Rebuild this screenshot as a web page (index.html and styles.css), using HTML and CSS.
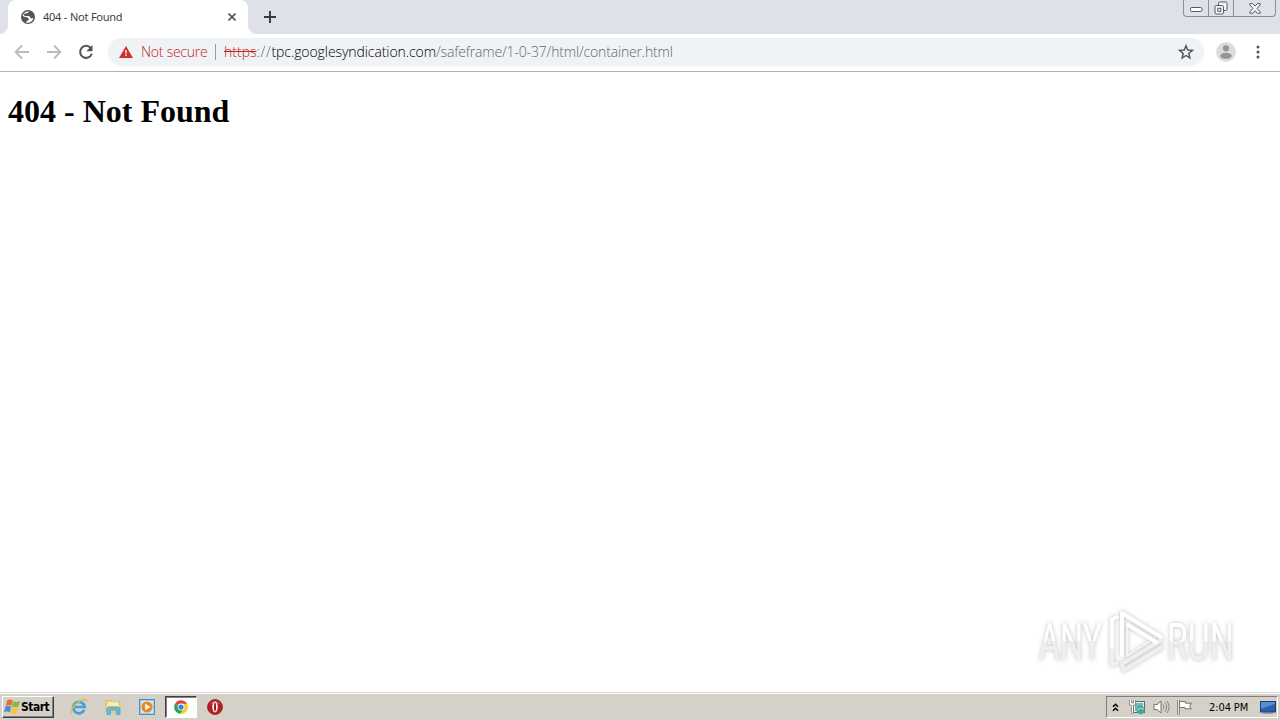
FILE: index.html
```html
<!DOCTYPE html>
<html lang="en">
<head>
  <meta charset="UTF-8">
  <title>404 - Not Found</title>
  <link rel="stylesheet" href="styles.css">
</head>
<body>
<div class="tabstrip">
  <div class="tab">
    <svg class="globe" width="14" height="14" viewBox="0 0 14 14">
      <circle cx="7" cy="7" r="7" fill="#50555a"/>
      <path d="M7.8 1.5 5.5 3.4l.3 1.5L4.5 6h4l1.300 1.800 2.800-.4A5.700 5.700 0 0 1 6 12.600l.2-1.500 1.800-1V8.700L6.800 7.600H3.600L1.400 6.500A5.600 5.600 0 0 1 7.800 1.500Z" fill="#fff" transform="rotate(8 7 7)"/>
      <path d="M2.5 4.3 5.5 3l1 2.200L4 6.500Z" fill="#50555a"/>
    </svg>
    <span class="tab-title">404 - Not Found</span>
    <svg class="close" width="8" height="8" viewBox="0 0 8 8"><path d="M.5.5l7 7M7.5.5l-7 7" stroke="#55595e" stroke-width="1.7"/></svg>
  </div>
  <svg class="plus" width="12" height="12" viewBox="0 0 12 12"><path d="M6 0v12M0 6h12" stroke="#35383d" stroke-width="1.9"/></svg>
  <div class="winbuttons">
    <div class="wb min"><svg width="13" height="6" viewBox="0 0 13 6"><rect x=".5" y=".5" width="11.5" height="4" rx="1.3" fill="#fff" stroke="#555a66"/></svg></div>
    <div class="wb max"><svg width="14" height="14" viewBox="0 0 14 14" fill="#f4f5f8" stroke="#555a66"><rect x="4.5" y="1" width="8.5" height="8.5" rx="1.2"/><rect x="1" y="4.5" width="8.5" height="8.5" rx="1.2"/><rect x="3.8" y="7.3" width="3" height="3"/></svg></div>
    <div class="wb cls"><svg width="12" height="11" viewBox="0 0 12 11"><path d="M.8.7h3L6 3.2 8.2.7h3v1.2L8 5.5l3.2 3.4v1.3h-3L6 7.7l-2.2 2.5h-3V8.9L4 5.5.8 1.9Z" fill="#f8f8fa" stroke="#555a66"/></svg></div>
  </div>
</div>

<div class="toolbar">
  <svg class="nav" width="16" height="16" viewBox="0 0 16 16"><path d="M15 8H2M8 1.5 1.6 8 8 14.5" fill="none" stroke="#b9babc" stroke-width="1.8"/></svg>
  <svg class="nav" width="16" height="16" viewBox="0 0 16 16"><path d="M1 8h13M8 1.5 14.4 8 8 14.5" fill="none" stroke="#b9babc" stroke-width="1.8"/></svg>
  <svg class="nav" width="16" height="16" viewBox="0 0 16 16"><path d="M12.7 4A6 6 0 1 0 13.8 9.7" fill="none" stroke="#505357" stroke-width="2"/><path d="M14.5 1v6.3H8.3Z" fill="#505357"/></svg>
  <div class="omnibox">
    <svg width="14" height="12" viewBox="0 0 14 12"><path d="M7 0l7 12H0Z" fill="#cf3029"/><path d="M7 4v3.6M7 8.6v1.5" stroke="#fff" stroke-width="1.4"/></svg>
    <span class="notsecure">Not secure</span>
    <span class="sep"></span>
    <div class="url"><span class="scheme">https</span><span class="slashes">://</span><span class="host">tpc.googlesyndication.com</span><span class="path">/safeframe/1-0-37/html/container.html</span></div>
    <svg class="star" width="16" height="16" viewBox="0 0 16 16"><path d="M8 1.7 9.7 6l4.7.4-3.6 3 1.1 4.6L8 11.5 4.1 14l1.1-4.6-3.6-3L6.3 6Z" fill="none" stroke="#505357" stroke-width="1.4"/></svg>
  </div>
  <svg class="avatar" width="20" height="20" viewBox="0 0 20 20"><circle cx="10" cy="10" r="10" fill="#dcdcdc"/><circle cx="10" cy="6.3" r="3.1" fill="#949494"/><ellipse cx="10" cy="13.8" rx="5.8" ry="3" fill="#949494"/></svg>
  <svg class="dots" width="4" height="14" viewBox="0 0 4 14" fill="#505357"><circle cx="2" cy="2" r="1.5"/><circle cx="2" cy="7" r="1.5"/><circle cx="2" cy="12" r="1.5"/></svg>
</div>

<div class="page">
  <h1>404 - Not Found</h1>
  <div class="watermark">
    <svg width="246" height="80" viewBox="0 0 246 80">
      <defs>
        <linearGradient id="fade" gradientUnits="userSpaceOnUse" x1="0" y1="17" x2="0" y2="55">
          <stop offset="0.5" stop-color="#fff"/>
          <stop offset="0.5" stop-color="#efefef"/>
        </linearGradient>
      </defs>
      <g class="wm-letters" fill="url(#fade)">
        <text x="9" y="55" textLength="63" lengthAdjust="spacingAndGlyphs">ANY</text>
        <text x="137" y="55" textLength="67" lengthAdjust="spacingAndGlyphs">RUN</text>
      </g>
      <g class="wm-logo" fill="none" stroke-linejoin="round" stroke-linecap="round">
        <path d="M82 42v18l5-2M92 59l2 6 38-23M92 59l39-24" stroke="#efefef"/>
        <path d="M82 42V14l5-2" stroke="#fff"/>
        <path d="M92 50V8l39 24M98 20l28 17" stroke="#fff"/>
        <path d="M97 22v29l22-14" stroke="#f4f4f4" stroke-width="2"/>
      </g>
    </svg>
  </div>
</div>

<div class="taskbar">
  <div class="start">
    <svg width="17" height="16" viewBox="0 0 17 16">
      <path d="M3.2 1.5Q6-.5 8.7 1.5L7.4 7Q4.7 5.2 1.7 7Z" fill="#ef6a2d"/>
      <path d="M9.3 1.9Q12.3 4 16 1.9L14.6 7.5Q11 9 7.9 7.3Z" fill="#83b94a"/>
      <path d="M1.4 7.7Q4.3 6 7.2 7.8L5.8 13.3Q3 11.5 0 13.3Z" fill="#4b8fd4"/>
      <path d="M7.7 8.2Q11 10 14.4 8.3L12.9 14Q9.5 15.6 6.3 13.8Z" fill="#f8c53a"/>
    </svg>
    <span>Start</span>
  </div>
  <div class="launch">
    <div class="app">
      <svg width="18" height="18" viewBox="0 0 18 18"><path d="M14.3 11.8A5.7 5.7 0 1 1 14.7 9H5" fill="none" stroke="#3fa2dc" stroke-width="2.7"/><path d="M2 16C-1 13 4 6.5 9.5 3.3 13.5 1 17 .6 16.8 3.5" fill="none" stroke="#e6bd3e" stroke-width="1.4"/></svg>
    </div>
    <div class="app">
      <svg width="18" height="18" viewBox="0 0 18 18"><path d="M2 2.5h5l1 1.5h8V14H2Z" fill="#f0d57a" stroke="#d4b45c" stroke-width=".7"/><path d="M4 5h10M3 7h12" stroke="#fff3b9" stroke-width="1.5"/><path d="M3 16.5v-5Q3 9 5.5 9h7.5Q16 9 16 11.5v5h-3.5v-4.5H6.5v4.5Z" fill="#65b7df" stroke="#4b95bf" stroke-width=".6"/></svg>
    </div>
    <div class="app">
      <svg width="18" height="18" viewBox="0 0 18 18"><rect x="1.5" y="1.5" width="15" height="15" fill="#9bc9ec" stroke="#4e8fc8"/><rect x="3" y="3" width="12" height="12" fill="#d4e9f7"/><circle cx="9" cy="9" r="5.6" fill="#ef8420"/><path d="M7.2 5.7 12.4 9l-5.2 3.3Z" fill="#fff"/></svg>
    </div>
    <div class="app active">
      <svg width="16" height="16" viewBox="0 0 16 16"><path d="M8 8 2.1 4.6A6.8 6.8 0 0 1 14 4.7Z" fill="#dc4537"/><path d="M8 8 2.1 4.6A6.8 6.8 0 0 0 7.5 14.8L11 9.7Z" fill="#2da451"/><path d="M8 4.7h6A6.8 6.8 0 0 1 7.5 14.8L11 9.7Z" fill="#fbcb35"/><circle cx="8" cy="8" r="3.4" fill="#fff"/><circle cx="8" cy="8" r="2.6" fill="#3d7fe0"/></svg>
    </div>
    <div class="app">
      <svg width="18" height="18" viewBox="0 0 18 18"><circle cx="9" cy="9" r="7.5" fill="#b91d22" stroke="#7e1215" stroke-width=".7"/><path d="M3.5 6Q9-1 14.5 6Z" fill="#da6261" opacity=".6"/><ellipse cx="9" cy="9" rx="2.7" ry="5.4" fill="#fff"/><ellipse cx="9" cy="9" rx="1" ry="4.4" fill="#98171b"/></svg>
    </div>
  </div>
  <div class="tray">
    <svg class="chev" width="7" height="9" viewBox="0 0 7 9"><path d="M1 3.8 3.5 1.2 6 3.8M1 7.8 3.5 5.2 6 7.8" fill="none" stroke="#000" stroke-width="1.4"/></svg>
    <svg class="net" width="18" height="16" viewBox="0 0 18 16"><rect x="4.5" y="2.5" width="11" height="11" fill="#e4f1ef" stroke="#566b70"/><rect x="6" y="4" width="8" height="8" fill="#7bb3ae"/><circle cx="11.5" cy="11" r="4.2" fill="#46a69b"/><path d="M8 11q3-3 7-1" stroke="#b8e0d0" fill="none"/><path d="M1.5 1v4h4V1M3.5 5v9.5" fill="none" stroke="#666" stroke-width="2.5"/><path d="M1.5 1v4h4V1M3.5 5v9" fill="none" stroke="#fff" stroke-width="1.3"/></svg>
    <svg class="vol" width="17" height="16" viewBox="0 0 17 16"><path d="M1 5.5h3L8 2v12l-4-3.5H1Z" fill="#fff" stroke="#77736f"/><path d="M10 5.5q1.8 2.5 0 5M12 3.5q3.4 4.5 0 9M14 2q4.2 6 0 12" stroke="#8b8782" fill="none"/></svg>
    <svg class="flag" width="17" height="16" viewBox="0 0 17 16"><path d="M2.5 1v14.5" stroke="#68645f" stroke-width="2.3"/><path d="M3.5 2.5h6v1.7h6l-2 3 1.8 2.6H9V8.5H3.5Z" fill="#fff" stroke="#77736f"/><path d="M2.5 1v14" stroke="#fff" stroke-width=".8"/></svg>
    <span class="clock">2:04 PM</span>
    <svg class="desk" width="16" height="13" viewBox="0 0 16 13"><rect x=".5" y=".5" width="15" height="10.5" fill="#285fae" stroke="#173f7b"/><path d="M1 1h14v2L1 8Z" fill="#598dce"/><path d="M3 12h10" stroke="#626b78"/></svg>
  </div>
</div>
</body>
</html>
```

FILE: styles.css
```css
body {
  margin: 0;
  width: 1280px;
  height: 720px;
  display: flex;
  flex-direction: column;
  overflow: hidden;
  background: #fff;
  font-family: "DejaVu Sans Condensed", "Liberation Sans", sans-serif;
}
svg {
  display: block;
  flex: none;
}

.tabstrip {
  display: flex;
  height: 34px;
  background: #dee1e8;
}
.tab {
  position: relative;
  display: flex;
  align-items: center;
  box-sizing: border-box;
  width: 240px;
  margin-left: 8px;
  padding: 0 12px 0 13px;
  background: #fff;
  border-radius: 8px 8px 0 0;
}
.tab::before,
.tab::after {
  content: "";
  position: absolute;
  bottom: 0;
  width: 8px;
  height: 8px;
}
.tab::before {
  left: -8px;
  background: radial-gradient(circle at 0 0, transparent 7.5px, #fff 8px);
}
.tab::after {
  right: -8px;
  background: radial-gradient(circle at 100% 0, transparent 7.5px, #fff 8px);
}
.tab-title {
  flex: 1;
  margin: 0 0 2px 8px;
  font-family: "Noto Sans", sans-serif;
  font-size: 11px;
  letter-spacing: -0.32px;
  word-spacing: 0.4px;
  color: #3c3f43;
}
.plus {
  margin: 11px 0 0 16px;
}
.winbuttons {
  display: flex;
  box-sizing: border-box;
  width: 93px;
  height: 17px;
  margin: 0 4px 0 auto;
  border: 1px solid #8a8e99;
  border-top: 0;
  border-radius: 0 0 4px 4px;
}
.wb {
  display: flex;
  align-items: center;
  justify-content: center;
  border-right: 1px solid #8a8e99;
}
.min {
  width: 24px;
  padding-top: 4px;
}
.max {
  width: 24px;
}
.cls {
  flex: 1;
  border: 0;
}

.toolbar {
  display: flex;
  align-items: center;
  box-sizing: border-box;
  height: 38px;
  padding: 0 20px 1px 14px;
  border-bottom: 1px solid #b3b3b3;
}
.nav {
  margin-right: 16px;
}
.omnibox {
  display: flex;
  align-items: center;
  box-sizing: border-box;
  width: 1096px;
  height: 28px;
  margin-left: -2px;
  padding: 0 10px 0 11px;
  border-radius: 14px;
  background: #f0f3f5;
  font-family: "Open Sans", sans-serif;
  font-weight: 300;
  font-size: 14px;
  white-space: nowrap;
}
.notsecure {
  width: 67px;
  margin: 0 0 2px 8px;
  letter-spacing: -0.25px;
  color: #c4221c;
}
.sep {
  width: 1px;
  height: 16px;
  margin: 0 8px 0 7px;
  background: #9a9da0;
}
.url {
  flex: 1;
  margin-bottom: 2px;
  color: #63676b;
}
.scheme {
  color: #c4221c;
  text-decoration: line-through;
}
.slashes {
  letter-spacing: 0.7px;
}
.host {
  letter-spacing: -0.08px;
  color: #000;
}
.path {
  letter-spacing: -0.17px;
}
.avatar {
  margin-left: 12px;
}
.dots {
  margin-left: auto;
}

.page {
  flex: 1;
  position: relative;
  padding: 0 8px;
}
h1 {
  margin: 21px 0;
  font-family: "Liberation Serif", serif;
  font-size: 32px;
  line-height: 37px;
  color: #000;
}
.watermark {
  position: absolute;
  left: 1030px;
  top: 533px;
}
.watermark svg {
  filter: drop-shadow(0 0 2px rgba(0, 0, 0, 0.25));
}
.wm-letters {
  font-family: "Roboto", sans-serif;
  font-size: 52px;
}
.wm-logo {
  stroke-width: 4;
}

.taskbar {
  display: flex;
  align-items: center;
  box-sizing: border-box;
  height: 28px;
  padding: 2px 2px 1px 2px;
  border-top: 1px solid #d8d4cc;
  background: #d5d0c8;
  box-shadow: inset 0 1px 0 #fff;
}
.start {
  display: flex;
  align-items: center;
  box-sizing: border-box;
  width: 52px;
  height: 22px;
  padding-left: 1px;
  border: 1px solid;
  border-color: #fff #404040 #404040 #fff;
  box-shadow: inset -1px -1px 0 #808080;
  font-weight: bold;
  font-size: 12px;
  letter-spacing: -0.5px;
}
.launch {
  display: flex;
  margin-left: 9px;
  gap: 2px;
}
.app {
  display: flex;
  align-items: center;
  justify-content: center;
  box-sizing: border-box;
  width: 32px;
  height: 22px;
}
.active {
  background: #fff;
  border: 1px solid;
  border-color: #404040 #fff #fff #404040;
  box-shadow: inset 1px 1px 0 #808080;
}
.tray {
  display: flex;
  align-items: center;
  box-sizing: border-box;
  width: 172px;
  height: 22px;
  margin-left: auto;
  padding-left: 5px;
  border: 1px solid;
  border-color: #808080 #fff #fff #808080;
}
.net {
  margin-left: 10px;
}
.vol {
  margin-left: 6px;
}
.flag {
  margin-left: 6px;
}
.clock {
  width: 40px;
  margin-left: 16px;
  font-size: 11px;
  letter-spacing: -0.1px;
  white-space: nowrap;
}
.desk {
  margin-left: 11px;
}
```
